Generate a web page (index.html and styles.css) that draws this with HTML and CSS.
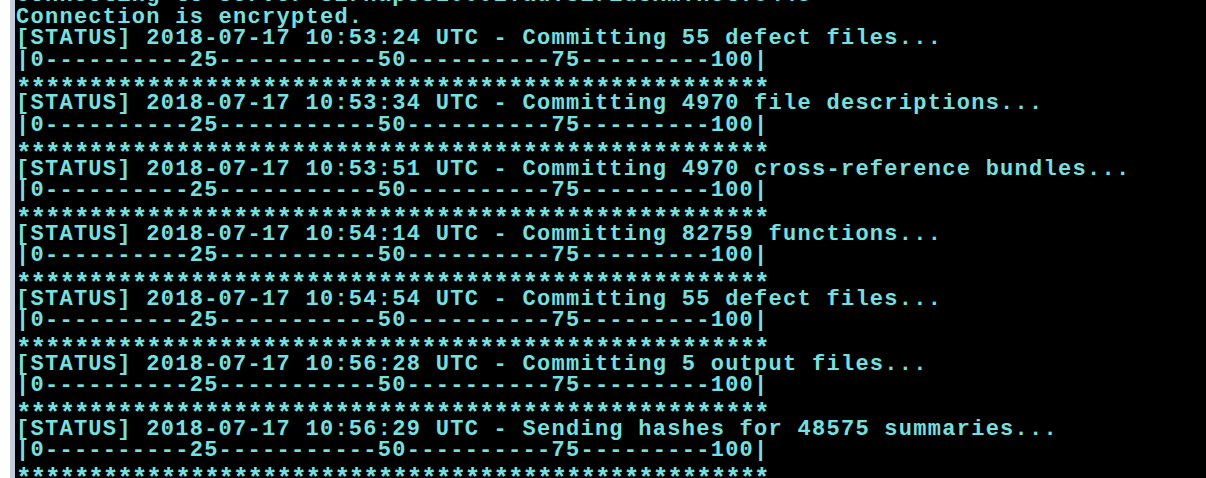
FILE: index.html
```html
<!DOCTYPE html>
<html>
<head>
<meta charset="utf-8">
<link rel="stylesheet" href="styles.css">
</head>
<body>
<div class="window">
  <div class="console">
    <div class="line">Connecting to server sirnapos10001.ad.siriusxm.net:8443</div>
    <div class="line">Connection is encrypted.</div>
    <div class="line">[STATUS] 2018-07-17 10:53:24 UTC - Committing 55 defect files...</div>
    <div class="line">|0----------25-----------50----------75---------100|</div>
    <div class="line stars">****************************************************</div>
    <div class="line">[STATUS] 2018-07-17 10:53:34 UTC - Committing 4970 file descriptions...</div>
    <div class="line">|0----------25-----------50----------75---------100|</div>
    <div class="line stars">****************************************************</div>
    <div class="line">[STATUS] 2018-07-17 10:53:51 UTC - Committing 4970 cross-reference bundles...</div>
    <div class="line">|0----------25-----------50----------75---------100|</div>
    <div class="line stars">****************************************************</div>
    <div class="line">[STATUS] 2018-07-17 10:54:14 UTC - Committing 82759 functions...</div>
    <div class="line">|0----------25-----------50----------75---------100|</div>
    <div class="line stars">****************************************************</div>
    <div class="line">[STATUS] 2018-07-17 10:54:54 UTC - Committing 55 defect files...</div>
    <div class="line">|0----------25-----------50----------75---------100|</div>
    <div class="line stars">****************************************************</div>
    <div class="line">[STATUS] 2018-07-17 10:56:28 UTC - Committing 5 output files...</div>
    <div class="line">|0----------25-----------50----------75---------100|</div>
    <div class="line stars">****************************************************</div>
    <div class="line">[STATUS] 2018-07-17 10:56:29 UTC - Sending hashes for 48575 summaries...</div>
    <div class="line">|0----------25-----------50----------75---------100|</div>
    <div class="line stars">****************************************************</div>
  </div>
</div>
</body>
</html>
```
FILE: styles.css
```css
html, body {
  margin: 0;
  padding: 0;
  width: 1206px;
  height: 478px;
  overflow: hidden;
  background: #ffffff;
}

.window {
  margin-left: 10px;
  height: 478px;
  border-left: 5px solid #c2cde0;
  background: #000000;
  overflow: hidden;
}

.console {
  margin-top: -15px;
  padding-left: 1px;
  display: flex;
  flex-direction: column;
  font-family: "Liberation Mono", "DejaVu Sans Mono", monospace;
  font-weight: bold;
  font-size: 22px;
  letter-spacing: 1.27px;
  color: #72e2e0;
}

.line {
  height: 21.7px;
  line-height: 21.7px;
  white-space: pre;
  flex: none;
}

.stars {
  box-sizing: border-box;
  padding-top: 7px;
  font-size: 26px;
  letter-spacing: -1.13px;
}
```
